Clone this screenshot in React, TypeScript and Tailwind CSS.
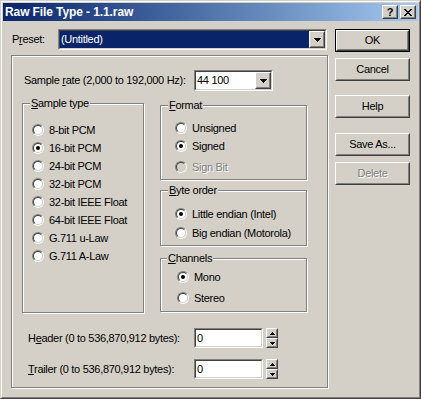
import React from "react";

// Win2000 classic dialog bits
const Raised: React.FC<{ className?: string; children?: React.ReactNode }> = ({ className = "", children }) => (
  <div className={`border border-t-white border-l-white border-b-[#404040] border-r-[#404040] bg-[#d4d0c8] ${className}`}>
    <div className="h-full border border-t-[#d4d0c8] border-l-[#d4d0c8] border-b-[#808080] border-r-[#808080] flex items-center justify-center">
      {children}
    </div>
  </div>
);

const Sunken: React.FC<{ className?: string; children?: React.ReactNode }> = ({ className = "", children }) => (
  <div className={`border border-t-[#808080] border-l-[#808080] border-b-white border-r-white ${className}`}>
    <div className="h-full border border-t-[#404040] border-l-[#404040] border-b-[#d4d0c8] border-r-[#d4d0c8] bg-white flex">
      {children}
    </div>
  </div>
);

const DownArrow: React.FC = () => (
  <svg width="7" height="4" shapeRendering="crispEdges">
    <rect x="0" y="0" width="7" height="1" fill="#000" />
    <rect x="1" y="1" width="5" height="1" fill="#000" />
    <rect x="2" y="2" width="3" height="1" fill="#000" />
    <rect x="3" y="3" width="1" height="1" fill="#000" />
  </svg>
);

const SpinArrow: React.FC<{ up?: boolean }> = ({ up }) => (
  <svg width="5" height="3" shapeRendering="crispEdges">
    {up ? (
      <>
        <rect x="2" y="0" width="1" height="1" fill="#000" />
        <rect x="1" y="1" width="3" height="1" fill="#000" />
        <rect x="0" y="2" width="5" height="1" fill="#000" />
      </>
    ) : (
      <>
        <rect x="0" y="0" width="5" height="1" fill="#000" />
        <rect x="1" y="1" width="3" height="1" fill="#000" />
        <rect x="2" y="2" width="1" height="1" fill="#000" />
      </>
    )}
  </svg>
);

const CloseGlyph: React.FC = () => {
  const px: [number, number][] = [
    [0, 0], [1, 0], [6, 0], [7, 0],
    [1, 1], [2, 1], [5, 1], [6, 1],
    [2, 2], [3, 2], [4, 2], [5, 2],
    [3, 3], [4, 3],
    [2, 4], [3, 4], [4, 4], [5, 4],
    [1, 5], [2, 5], [5, 5], [6, 5],
    [0, 6], [1, 6], [6, 6], [7, 6],
  ];
  return (
    <svg width="8" height="7" shapeRendering="crispEdges">
      {px.map(([x, y], i) => (
        <rect key={i} x={x} y={y} width="1" height="1" fill="#000" />
      ))}
    </svg>
  );
};

const Combo: React.FC<{ className?: string; selected?: boolean; value: string }> = ({ className = "", selected, value }) => (
  <Sunken className={className}>
    <div
      className={`flex-1 flex items-center pl-[1px] ${selected ? "bg-[#0a246a] text-white" : "text-black"}`}
    >
      {value}
    </div>
    <Raised className="w-[16px] h-full">
      <DownArrow />
    </Raised>
  </Sunken>
);

const Radio: React.FC<{ checked?: boolean; disabled?: boolean }> = ({ checked, disabled }) => (
  <span className="flex shrink-0 w-[12px] h-[12px] rounded-full border border-t-[#808080] border-l-[#808080] border-b-white border-r-white">
    <span
      className={`flex items-center justify-center w-[10px] h-[10px] rounded-full border border-t-[#404040] border-l-[#404040] border-b-[#d4d0c8] border-r-[#d4d0c8] ${disabled ? "bg-[#d4d0c8]" : "bg-white"}`}
    >
      {checked && <span className="w-[4px] h-[4px] rounded-full bg-black" />}
    </span>
  </span>
);

const Option: React.FC<{ label: string; checked?: boolean; disabled?: boolean; className?: string }> = ({
  label,
  checked,
  disabled,
  className = "",
}) => (
  <div className={`flex items-center gap-[5px] h-[18px] whitespace-nowrap ${className}`}>
    <Radio checked={checked} disabled={disabled} />
    <span className={disabled ? "text-[#808080] [text-shadow:1px_1px_0_#fff]" : ""}>{label}</span>
  </div>
);

const GroupBox: React.FC<{ title: React.ReactNode; className?: string; labelLeft?: string; children?: React.ReactNode }> = ({
  title,
  className = "",
  labelLeft = "left-[7px]",
  children,
}) => (
  <div
    className={`relative border border-[#808080] shadow-[1px_1px_0_#fff,inset_1px_1px_0_#fff] ${className}`}
  >
    <span className={`absolute -top-[7px] ${labelLeft} px-[1px] bg-[#d4d0c8] leading-[13px] whitespace-nowrap`}>
      {title}
    </span>
    {children}
  </div>
);

const Button: React.FC<{ label: React.ReactNode; isDefault?: boolean; disabled?: boolean; className?: string }> = ({
  label,
  isDefault,
  disabled,
  className = "",
}) => {
  const text = <span className={disabled ? "text-[#808080] [text-shadow:1px_1px_0_#fff]" : ""}>{label}</span>;
  return isDefault ? (
    <div className={`w-[75px] h-[23px] border border-black ${className}`}>
      <Raised className="h-full">{text}</Raised>
    </div>
  ) : (
    <Raised className={`w-[75px] h-[23px] ${className}`}>{text}</Raised>
  );
};

const SpinField: React.FC<{ label: React.ReactNode; className?: string }> = ({ label, className = "" }) => (
  <div className={`flex items-center ${className}`}>
    <span className="w-[166px] whitespace-nowrap">{label}</span>
    <Sunken className="w-[69px] h-[20px]">
      <span className="flex items-center pl-[1px]">0</span>
    </Sunken>
    <div className="ml-[3px] flex flex-col w-[12px] h-[20px]">
      <Raised className="h-[10px]">
        <SpinArrow up />
      </Raised>
      <Raised className="h-[10px]">
        <SpinArrow />
      </Raised>
    </div>
  </div>
);

const sampleTypes = [
  "8-bit PCM",
  "16-bit PCM",
  "24-bit PCM",
  "32-bit PCM",
  "32-bit IEEE Float",
  "64-bit IEEE Float",
  "G.711 u-Law",
  "G.711 A-Law",
];

const App: React.FC = () => {
  return (
    <div className="w-[421px] h-[399px] bg-[#d4d0c8] border border-t-[#d4d0c8] border-l-[#d4d0c8] border-b-[#404040] border-r-[#404040] font-['Liberation_Sans',Arial,sans-serif] text-[11px] leading-[13px] tracking-[-0.3px] text-black select-none">
      <div className="h-full border border-t-white border-l-white border-b-[#808080] border-r-[#808080] p-[1px] flex flex-col">
        {/* Title bar */}
        <div className="h-[18px] shrink-0 flex items-center bg-gradient-to-r from-[#0a246a] to-[#a6caf0] pl-[2px] pr-[2px]">
          <span className="flex-1 text-white font-bold text-[12px] tracking-[-0.1px] whitespace-nowrap">
            Raw File Type - 1.1.raw
          </span>
          <Raised className="w-[16px] h-[14px]">
            <span className="font-bold text-[11px] leading-[10px]">?</span>
          </Raised>
          <Raised className="w-[16px] h-[14px] ml-[2px]">
            <CloseGlyph />
          </Raised>
        </div>

        {/* Body */}
        <div className="flex pl-[8px] pt-[8px]">
          <div className="w-[317px] flex flex-col">
            <div className="flex items-center h-[21px]">
              <span className="w-[47px] pl-[1px]">
                P<u>r</u>eset:
              </span>
              <Combo className="w-[269px] h-[21px]" selected value="(Untitled)" />
            </div>

            <div className="mt-[5px] h-[333px] border border-[#808080] shadow-[1px_1px_0_#fff,inset_1px_1px_0_#fff] flex flex-col">
              <div className="mt-[14px] pl-[12px] flex items-center h-[21px]">
                <span className="w-[170px] whitespace-nowrap">
                  Sample <u>r</u>ate (2,000 to 192,000 Hz):
                </span>
                <Combo className="w-[79px] h-[21px]" value="44 100" />
              </div>

              <div className="mt-[12px] pl-[10px] flex items-start">
                <GroupBox
                  className="w-[122px] h-[210px] pt-[17px] pl-[9px]"
                  title={
                    <>
                      <u>S</u>ample type
                    </>
                  }
                >
                  {sampleTypes.map((t) => (
                    <Option key={t} label={t} checked={t === "16-bit PCM"} />
                  ))}
                </GroupBox>

                <div className="ml-[16px] flex flex-col">
                  <GroupBox
                    className="mt-[2px] w-[147px] h-[75px] pt-[13px] pl-[14px]"
                    title={
                      <>
                        <u>F</u>ormat
                      </>
                    }
                  >
                    <Option label="Unsigned" />
                    <Option label="Signed" checked />
                    <Option label="Sign Bit" disabled className="mt-[3px]" />
                  </GroupBox>

                  <GroupBox
                    className="mt-[10px] w-[147px] h-[56px] pt-[14px] pl-[14px]"
                    title={
                      <>
                        <u>B</u>yte order
                      </>
                    }
                  >
                    <Option label="Little endian (Intel)" checked />
                    <Option label="Big endian (Motorola)" className="mt-[1px]" />
                  </GroupBox>

                  <GroupBox
                    className="mt-[12px] w-[147px] h-[54px] pt-[9px] pl-[16px]"
                    labelLeft="left-[6px]"
                    title={
                      <>
                        <u>C</u>hannels
                      </>
                    }
                  >
                    <Option label="Mono" checked />
                    <Option label="Stereo" className="mt-[3px]" />
                  </GroupBox>
                </div>
              </div>

              <SpinField
                className="mt-[15px] pl-[16px]"
                label={
                  <>
                    H<u>e</u>ader (0 to 536,870,912 bytes):
                  </>
                }
              />
              <SpinField
                className="mt-[11px] pl-[16px]"
                label={
                  <>
                    <u>T</u>railer (0 to 536,870,912 bytes):
                  </>
                }
              />
            </div>
          </div>

          <div className="ml-[7px] flex flex-col">
            <Button label="OK" isDefault />
            <Button label="Cancel" className="mt-[6px]" />
            <Button label="Help" className="mt-[14px]" />
            <Button label="Save As..." className="mt-[15px]" />
            <Button label="Delete" disabled className="mt-[6px]" />
          </div>
        </div>
      </div>
    </div>
  );
};

export default App;
